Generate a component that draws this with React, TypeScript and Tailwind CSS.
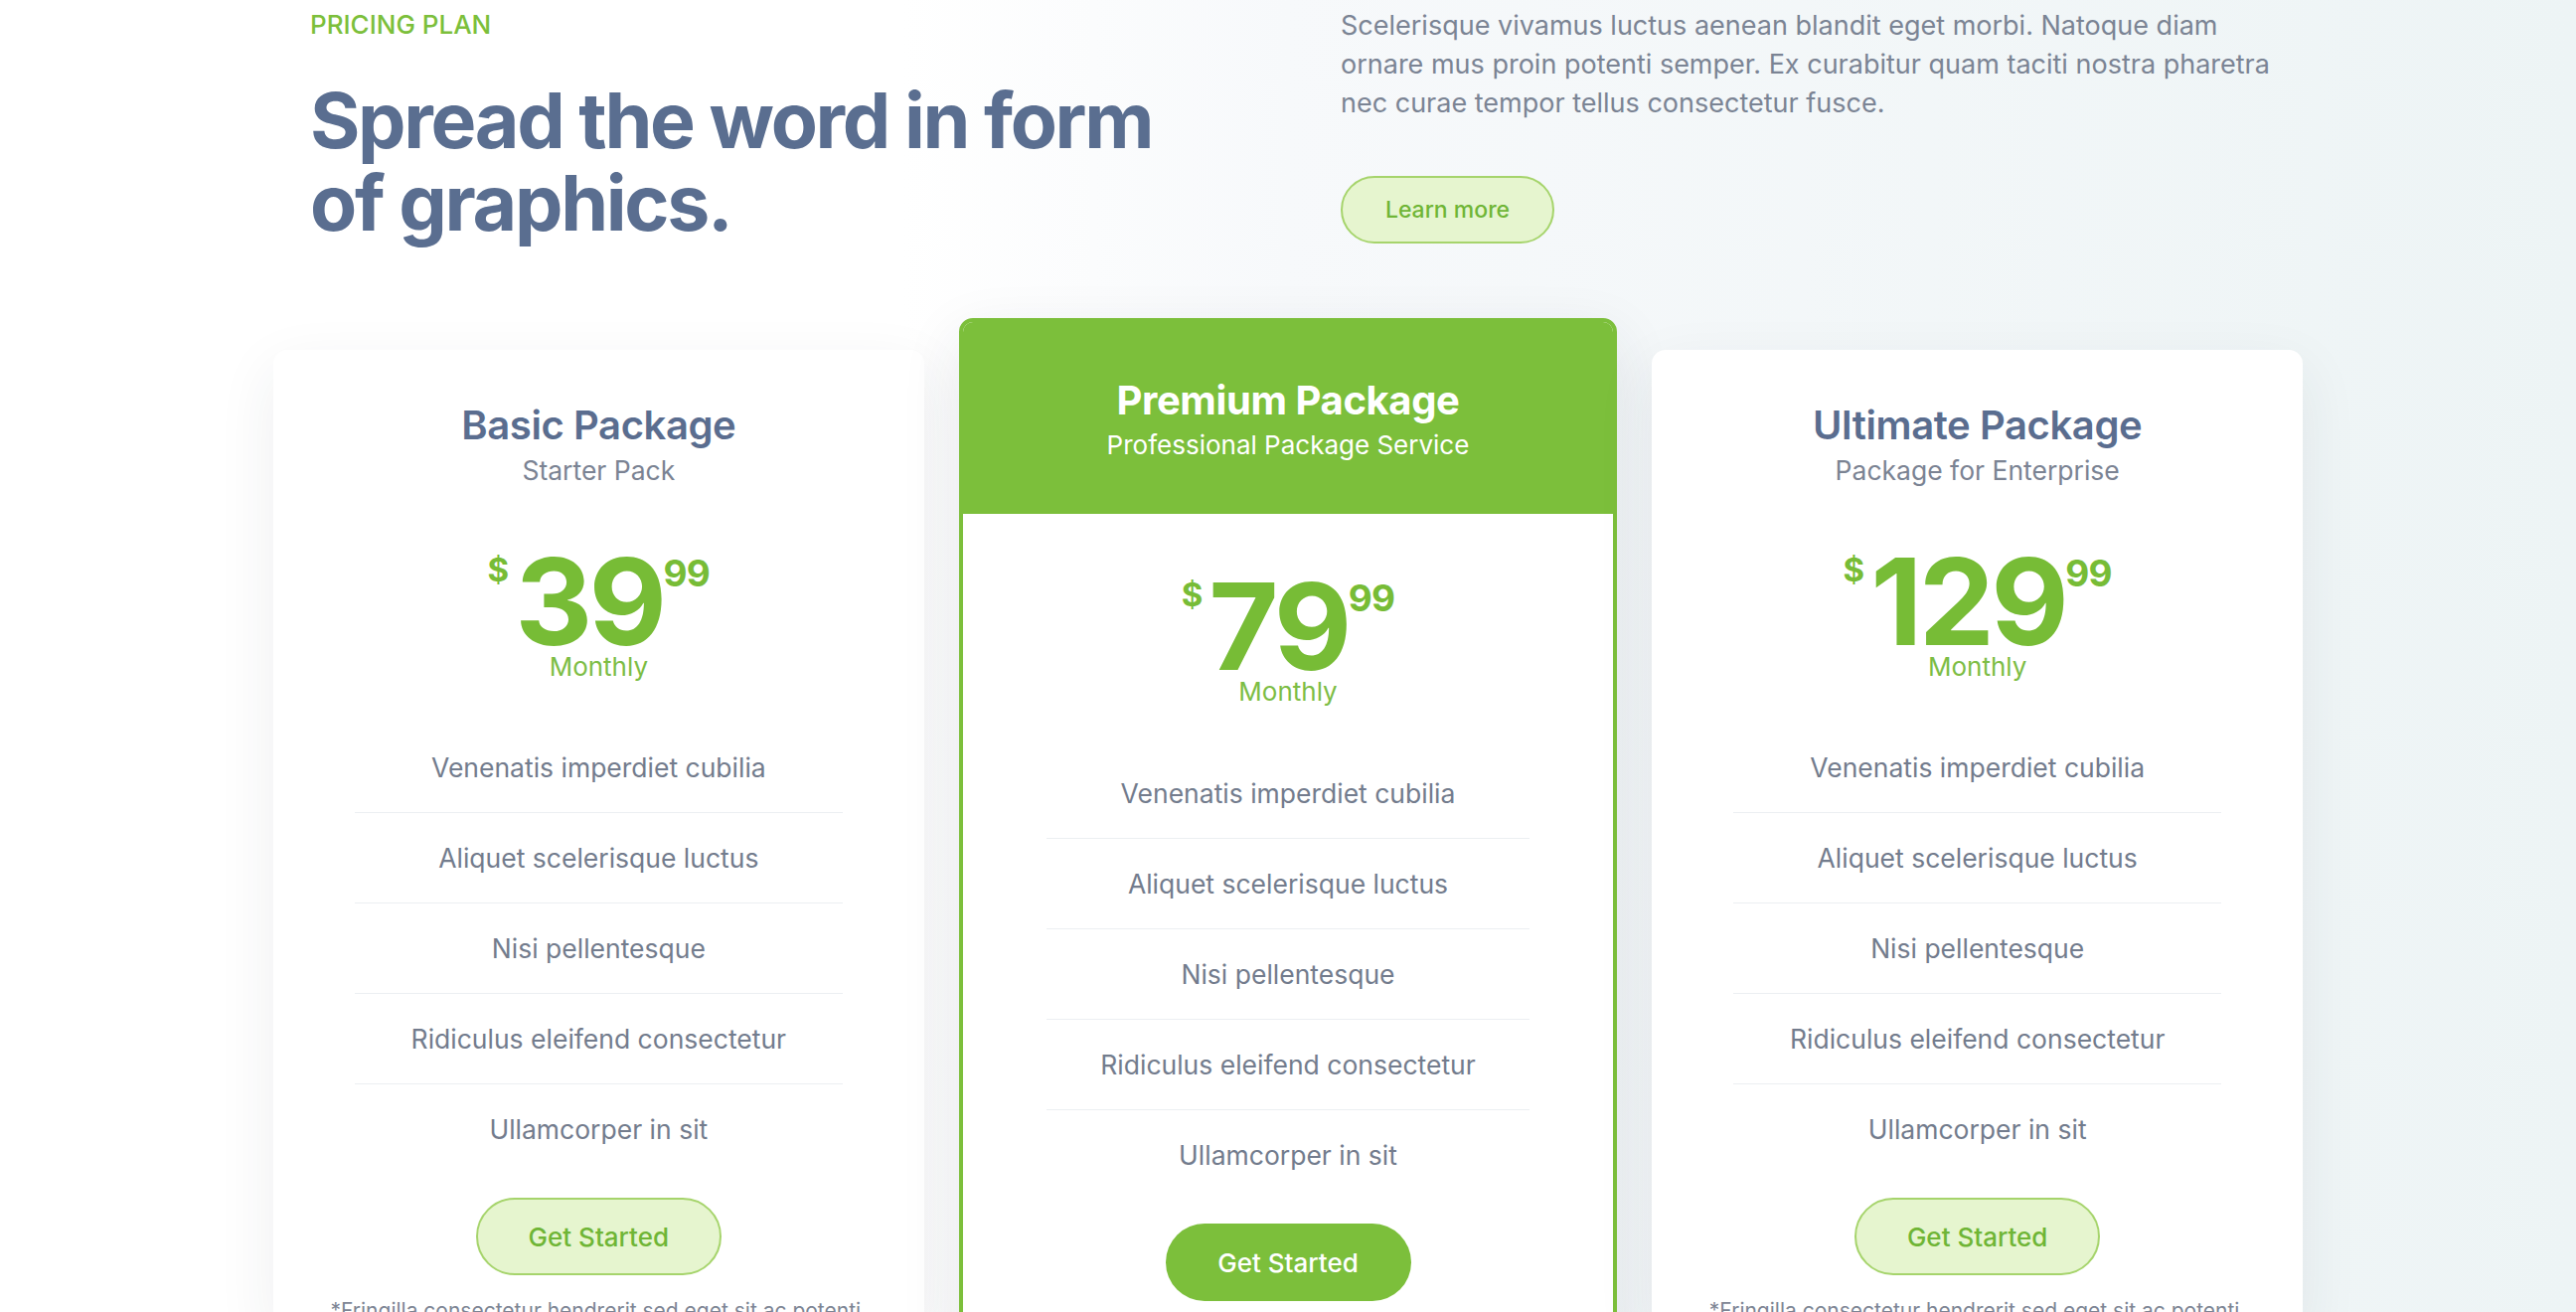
import React from "react";

interface Plan {
  name: string;
  subtitle: string;
  price: string;
  cents: string;
  featured?: boolean;
}

const features = [
  "Venenatis imperdiet cubilia",
  "Aliquet scelerisque luctus",
  "Nisi pellentesque",
  "Ridiculus eleifend consectetur",
  "Ullamcorper in sit",
];

const plans: Plan[] = [
  { name: "Basic Package", subtitle: "Starter Pack", price: "39", cents: "99" },
  { name: "Premium Package", subtitle: "Professional Package Service", price: "79", cents: "99", featured: true },
  { name: "Ultimate Package", subtitle: "Package for Enterprise", price: "129", cents: "99" },
];

function Price({ plan }: { plan: Plan }) {
  return (
    <div className="flex flex-col items-center">
      <div className="flex items-start justify-center text-[#77bc36] font-bold">
        <span className="text-[33px] leading-none mt-[2px] mr-[6px]">$</span>
        <span className="text-[121px] leading-[100px] tracking-[-0.03em]">{plan.price}</span>
        <span className="text-[37px] leading-none mt-[3px] tracking-[-0.02em]">{plan.cents}</span>
      </div>
      <span className="mt-[1px] text-[26px] leading-[30px] text-[#7dbd45]">Monthly</span>
    </div>
  );
}

function FeatureList({ featured }: { featured?: boolean }) {
  return (
    <ul className={`${featured ? "mt-[42px] mx-[84px]" : "mt-[41px] mx-[82px]"} flex flex-col`}>
      {features.map((f, i) => (
        <li
          key={f}
          className={`py-[28px] text-center text-[26.5px] leading-[34px] text-[#737c8d] ${
            i < features.length - 1 ? "border-b border-[#eceff2]" : ""
          }`}
        >
          {f}
        </li>
      ))}
    </ul>
  );
}

function Footnote() {
  return (
    <p className="mt-[22px] px-[30px] text-center text-[21px] leading-[28px] text-[#7d8594]">
      *Fringilla consectetur hendrerit sed eget sit ac potenti.
    </p>
  );
}

function PlanCard({ plan }: { plan: Plan }) {
  if (plan.featured) {
    return (
      <div className="flex-1 rounded-[14px] border-[4px] border-[#7cbf3b] bg-white shadow-[0_20px_60px_rgba(40,50,70,0.10)] overflow-hidden">
        <div className="h-[193px] bg-[#7cbf3b] pt-[56px] text-center text-white">
          <h3 className="text-[40px] font-bold leading-[46px] tracking-[-0.01em]">{plan.name}</h3>
          <p className="mt-[5px] text-[26px] leading-[34px]">{plan.subtitle}</p>
        </div>
        <div className="mt-[63px]">
          <Price plan={plan} />
        </div>
        <FeatureList featured />
        <div className="mt-[24px] flex justify-center">
          <button className="h-[78px] w-[247px] rounded-full bg-[#7cbf3b] text-[26px] font-medium text-white">
            Get Started
          </button>
        </div>
        <Footnote />
      </div>
    );
  }

  return (
    <div className="mt-[32px] flex-1 rounded-[14px] bg-white pt-[53px] shadow-[0_20px_60px_rgba(40,50,70,0.08)]">
      <div className="text-center">
        <h3 className="text-[40px] font-semibold leading-[46px] text-[#5a6d8f] tracking-[-0.01em]">{plan.name}</h3>
        <p className="mt-[5px] text-[26.5px] leading-[34px] text-[#7b8393]">{plan.subtitle}</p>
      </div>
      <div className="mt-[65px]">
        <Price plan={plan} />
      </div>
      <FeatureList />
      <div className="mt-[24px] flex justify-center">
        <button className="h-[78px] w-[247px] rounded-full border-2 border-[#a6d46c] bg-[#e6f5cf] text-[26px] font-medium text-[#6fb536]">
          Get Started
        </button>
      </div>
      <Footnote />
    </div>
  );
}

export default function App() {
  return (
    <div
      className="h-[1320px] w-full overflow-hidden bg-linear-to-r from-white from-35% via-[#f7f9fb] to-[#edf4f5]"
      style={{ fontFamily: "Inter, 'Noto Sans', sans-serif" }}
    >
      <div className="mx-auto w-[2042px] pt-[10px]">
        {/* Cabeçalho */}
        <div className="flex">
          <div className="w-[1074px] pl-[37px]">
            <p className="text-[26px] font-medium leading-[30px] text-[#7cbf3b]">PRICING PLAN</p>
            <h2 className="mt-[40px] text-[77px] font-bold leading-[83px] tracking-[-0.03em] text-[#5a6e90]">
              Spread the word in form
              <br />
              of graphics.
            </h2>
          </div>
          <div className="-mt-[4px] w-[940px]">
            <p className="text-[27px] leading-[39px] text-[#7b8494]">
              Scelerisque vivamus luctus aenean blandit eget morbi. Natoque diam ornare mus proin potenti semper. Ex
              curabitur quam taciti nostra pharetra nec curae tempor tellus consectetur fusce.
            </p>
            <button className="mt-[54px] h-[68px] w-[215px] rounded-full border-2 border-[#a6d46c] bg-[#e6f5cf] text-[23px] font-medium text-[#6fb536]">
              Learn more
            </button>
          </div>
        </div>

        {/* Planos */}
        <div className="mt-[74px] flex items-start gap-[35px]">
          {plans.map((p) => (
            <PlanCard key={p.name} plan={p} />
          ))}
        </div>
      </div>
    </div>
  );
}
